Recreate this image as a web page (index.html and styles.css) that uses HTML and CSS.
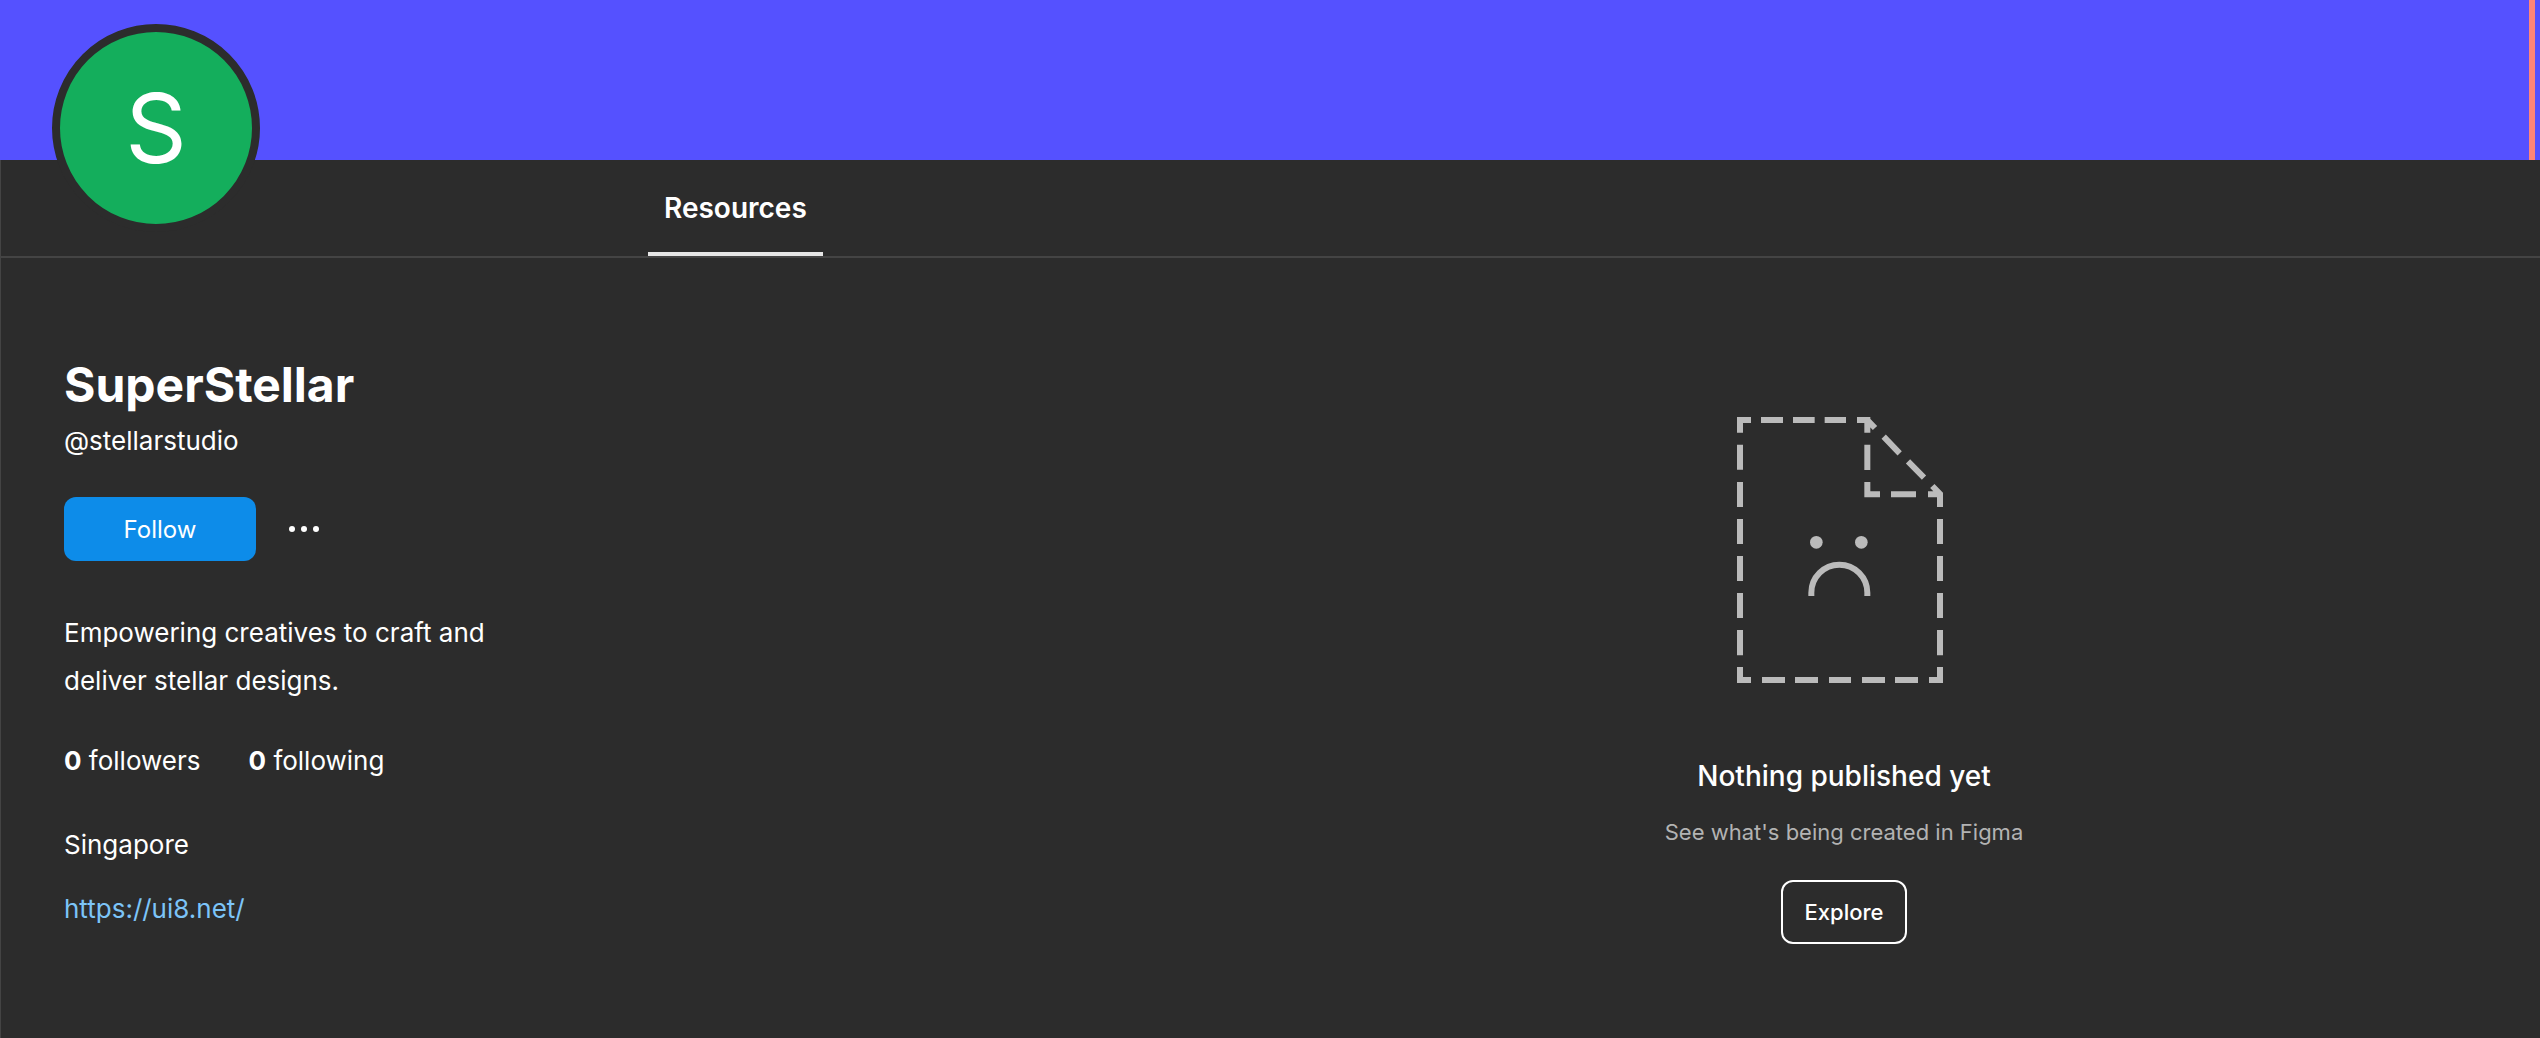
FILE: index.html
```
<!DOCTYPE html>
<html lang="en">
<head>
    <meta charset="UTF-8">
    <title>SuperStellar</title>
    <link rel="stylesheet" href="styles.css">
</head>
<body>
    <div class="banner">
        <div class="banner-edge"></div>
    </div>

    <header class="profile-bar">
        <div class="avatar">S</div>
        <nav class="tabs">
            <a class="tab active" href="#resources">Resources</a>
        </nav>
    </header>

    <main class="content">
        <section class="profile">
            <h1>SuperStellar</h1>
            <p class="handle">@stellarstudio</p>

            <div class="actions">
                <button class="follow" type="button">Follow</button>
                <button class="more" type="button" aria-label="More options">
                    <svg width="32" height="8" viewBox="0 0 32 8" fill="#fff">
                        <circle cx="4" cy="4" r="3"/>
                        <circle cx="16" cy="4" r="3"/>
                        <circle cx="28" cy="4" r="3"/>
                    </svg>
                </button>
            </div>

            <p class="bio">Empowering creatives to craft and deliver stellar designs.</p>

            <div class="stats">
                <span><strong>0</strong> followers</span>
                <span><strong>0</strong> following</span>
            </div>

            <p class="location">Singapore</p>
            <a class="website" href="https://ui8.net/">https://ui8.net/</a>
        </section>

        <section class="empty" id="resources">
            <svg class="empty-icon" width="220" height="268" viewBox="72 48 660 804" fill="none" stroke="#bbb" stroke-width="18">
                <!-- page outline -->
                <path d="M90 98V60H123M153 60H219M249 60H314M344 60H408"/>
                <path d="M90 134V209M90 246V321M90 357V432M90 468V543M90 579V654M90 690V766"/>
                <path d="M90 801V840H123M156 840H225M255 840H324M357 840H423M456 840H525M555 840H624M657 840H690V801"/>
                <path d="M690 766V690M690 654V579M690 543V468M690 432V357"/>
                <!-- folded corner -->
                <path d="M441 60H472V98M472 60L495 84M521 110L569 160M594 184L642 233M667 258L690 282V321M654 283H690"/>
                <path d="M472 134V210M472 246V283H510M543 283H618"/>
                <!-- sad face -->
                <path d="M304 588V578A84 84 0 0 1 472 578V588"/>
                <circle cx="319" cy="427" r="19" fill="#bbb" stroke="none"/>
                <circle cx="454" cy="427" r="19" fill="#bbb" stroke="none"/>
            </svg>
            <h2>Nothing published yet</h2>
            <p>See what's being created in Figma</p>
            <button class="explore" type="button">Explore</button>
        </section>
    </main>
</body>
</html>
```

FILE: styles.css
```
* {
    box-sizing: border-box;
}

body {
    margin: 0;
    min-height: 100vh;
    background-color: #2c2c2c;
    box-shadow: inset 1px 0 0 #444;
    color: #fff;
    font-family: Inter, "Liberation Sans", sans-serif;
    font-size: 26px;
    line-height: 48px;
}

h1, h2, p {
    margin: 0;
}

button {
    font-family: inherit;
    color: #fff;
    cursor: pointer;
}

.banner {
    display: flex;
    justify-content: flex-end;
    height: 160px;
    padding-right: 5px;
    background-color: #5551ff;
}

.banner-edge {
    width: 6px;
    background-color: #ff8577;
}

.profile-bar {
    position: relative;
    height: 98px;
    padding-left: 648px;
    border-bottom: 2px solid #444;
}

/* overlaps the banner */
.avatar {
    position: absolute;
    left: 52px;
    bottom: 24px;
    width: 208px;
    height: 208px;
    border: 8px solid #2c2c2c;
    border-radius: 50%;
    background-color: #14ae5c;
    font-size: 96px;
    line-height: 192px;
    text-align: center;
}

.tabs {
    display: flex;
    height: 100%;
}

.tab {
    padding: 24px 16px 0;
    color: #fff;
    font-size: 28px;
    font-weight: 600;
    text-decoration: none;
}

.tab.active {
    border-bottom: 4px solid #e6e6e6;
}

.content {
    display: grid;
    grid-template-columns: 1148px 1fr;
}

.profile {
    padding: 95px 64px 0;
}

.profile h1 {
    font-size: 48px;
    line-height: 64px;
}

.actions {
    display: flex;
    align-items: center;
    gap: 16px;
    margin: 32px 0 48px;
}

.follow {
    width: 192px;
    height: 64px;
    border: none;
    border-radius: 12px;
    background-color: #0d8ce9;
    font-size: 24px;
}

.more {
    display: flex;
    align-items: center;
    height: 64px;
    padding: 0 16px;
    border: none;
    background: none;
}

.bio {
    max-width: 448px;
}

.stats {
    display: flex;
    gap: 48px;
    margin: 32px 0 36px;
}

.location {
    margin-bottom: 16px;
}

.website {
    color: #7cc4f8;
    text-decoration: none;
}

.empty {
    display: flex;
    flex-direction: column;
    align-items: center;
    padding-top: 158px;
}

.empty h2 {
    margin: 68px 0 16px;
    font-size: 28px;
    font-weight: 500;
}

.empty p {
    color: #b3b3b3;
    font-size: 22px;
    line-height: 32px;
}

.explore {
    height: 64px;
    margin-top: 32px;
    padding: 0 22px;
    border: 2px solid #fff;
    border-radius: 12px;
    background: none;
    font-size: 22px;
    font-weight: 500;
}
```
